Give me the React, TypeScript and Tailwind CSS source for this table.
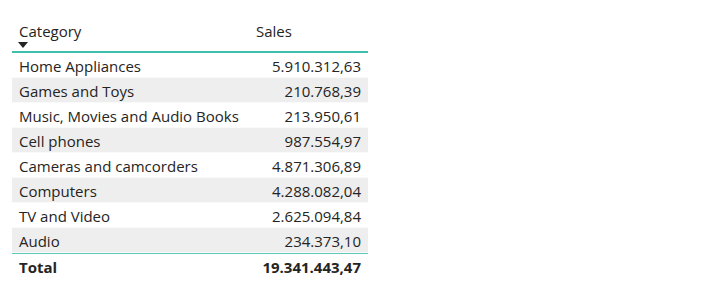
import React from "react";

const rows: [string, string][] = [
  ["Home Appliances", "5.910.312,63"],
  ["Games and Toys", "210.768,39"],
  ["Music, Movies and Audio Books", "213.950,61"],
  ["Cell phones", "987.554,97"],
  ["Cameras and camcorders", "4.871.306,89"],
  ["Computers", "4.288.082,04"],
  ["TV and Video", "2.625.094,84"],
  ["Audio", "234.373,10"],
];

export default function App() {
  return (
    <div
      className="w-[720px] h-[304px] bg-white text-[#252423]"
      style={{ fontFamily: '"Open Sans", "Noto Sans", sans-serif' }}
    >
      <div className="pt-[19px] pl-[12px] w-[368px]">
        <div className="grid grid-cols-[238px_118px] border-b-2 border-[#3fbfad] h-[34px]">
          <div className="pl-[7px] pt-[2px] text-[15px] leading-[20px] relative">
            Category
            <svg className="absolute left-[6px] top-[23px]" width="10" height="6" viewBox="0 0 10 6">
              <path d="M0 0 L10 0 L5 6 Z" fill="#252423" />
            </svg>
          </div>
          <div className="pl-[6px] pt-[2px] text-[15px] leading-[20px]">Sales</div>
        </div>
        {rows.map(([c, v], i) => (
          <div
            key={c}
            className={`grid grid-cols-[238px_118px] h-[25px] items-center pt-[2px] text-[15px] leading-[20px] border-b border-[#fafafa] ${
              i % 2 === 1 ? "bg-[#eeeeee]" : "bg-white"
            }`}
          >
            <div className="pl-[7px] whitespace-nowrap">{c}</div>
            <div className="text-right pr-[7px]">{v}</div>
          </div>
        ))}
        <div className="grid grid-cols-[238px_118px] h-[27px] items-center border-t border-[#5cc9b9] font-bold text-[15px]">
          <div className="pl-[7px]">Total</div>
          <div className="text-right pr-[7px]">19.341.443,47</div>
        </div>
      </div>
    </div>
  );
}
